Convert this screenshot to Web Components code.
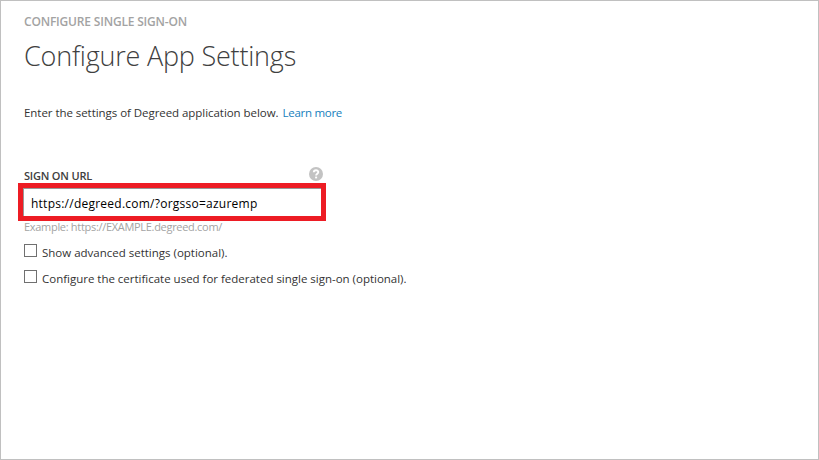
<!DOCTYPE html>
<html lang="en"><head><meta charset="utf-8"><title>Configure App Settings</title>
<style>html,body{margin:0;height:100%;background:#fff}</style></head>
<body>
<settings-page></settings-page>
<script>
// A single line of text tracked to an exact measure.
class TextLine extends HTMLElement {
  connectedCallback() {
    this.attachShadow({mode:'open'}).innerHTML = `<style>
      :host{display:block;white-space:nowrap;width:max-content}
      span{display:inline-block;white-space:nowrap}</style><span><slot></slot></span>`;
    const span = this.shadowRoot.querySelector('span');
    const natural = span.getBoundingClientRect().width;
    const target = +this.getAttribute('measure');
    if (target) span.style.letterSpacing = ((target - natural) / this.textContent.length) + 'px';
  }
}
class HelpIcon extends HTMLElement {
  connectedCallback() {
    this.attachShadow({mode:'open'}).innerHTML = `<style>:host{display:block;width:14px;height:14px}svg{display:block}</style>
      <svg width="14" height="14" viewBox="0 0 14 14"><circle cx="7" cy="7" r="7" fill="#c3c3c3"/>
      <path d="M4.8 5.3C4.8 2.5 9.3 2.6 9.3 5.1C9.3 6.7 7.1 6.8 7.1 8.6" fill="none" stroke="#fff" stroke-width="1.9"/>
      <rect x="6.1" y="9.6" width="2" height="1.8" fill="#fff"/></svg>`;
  }
}
class UrlField extends HTMLElement {
  connectedCallback() {
    this.attachShadow({mode:'open'}).innerHTML = `<style>
      :host{display:block;box-sizing:border-box;width:308px;height:38px;margin-left:-6px;border:5px solid #ed1c24}
      div{box-sizing:border-box;height:28px;border:1px solid #999;border-width:1px 0 0 1px;padding:6px 0 0 7px;
        font-size:12px;line-height:18px;color:#000}</style><div><slot></slot></div>`;
  }
}
class CheckOption extends HTMLElement {
  connectedCallback() {
    this.attachShadow({mode:'open'}).innerHTML = `<style>
      :host{display:flex;gap:5px;height:26px;align-items:flex-start}
      i{box-sizing:border-box;width:13px;height:13px;border:1px solid #707070;background:#fff}
      div{padding-top:1px;line-height:16px}</style><i></i><div><slot></slot></div>`;
  }
}
class SettingsPage extends HTMLElement {
  connectedCallback() {
    this.attachShadow({mode:'open'}).innerHTML = `<style>
      :host{display:block;box-sizing:border-box;width:819px;height:460px;border:1px solid #c0c0c0;padding:12px 23px;
        background:#fff;color:#333;font:11.5px/16px "Open Sans","Noto Sans",sans-serif}
      .kicker{font-size:12px;font-weight:600;color:#a3a3a3;height:17px;line-height:17px}
      h1{margin:6px 0 0;font-size:27px;line-height:40px;font-weight:300;color:#404040;height:40px}
      .intro{display:flex;gap:4px;margin-top:29px;height:16px}
      a{color:#1580bd;text-decoration:none}
      .label{display:flex;justify-content:space-between;width:299px;height:16px;margin-top:46px}
      .label text-line{font-size:11px;font-weight:600;color:#404040;padding-top:1px}
      .hint{color:#a3a3a3;font-size:11px;height:23px;line-height:12px}
    </style>
    <text-line class="kicker" measure="163">CONFIGURE SINGLE SIGN-ON</text-line>
    <h1><text-line measure="272">Configure App Settings</text-line></h1>
    <div class="intro"><text-line measure="254.5">Enter the settings of Degreed application below.</text-line><a><text-line measure="59.5">Learn more</text-line></a></div>
    <div class="label"><text-line measure="68">SIGN ON URL</text-line><help-icon></help-icon></div>
    <url-field><text-line measure="226.5">https://degreed.com/?orgsso=azuremp</text-line></url-field>
    <text-line class="hint" measure="198">Example: https://EXAMPLE.degreed.com/</text-line>
    <check-option><text-line measure="185.5">Show advanced settings (optional).</text-line></check-option>
    <check-option><text-line measure="364.5">Configure the certificate used for federated single sign-on (optional).</text-line></check-option>`;
  }
}
customElements.define('text-line', TextLine);
customElements.define('help-icon', HelpIcon);
customElements.define('url-field', UrlField);
customElements.define('check-option', CheckOption);
customElements.define('settings-page', SettingsPage);
</script>
</body></html>
